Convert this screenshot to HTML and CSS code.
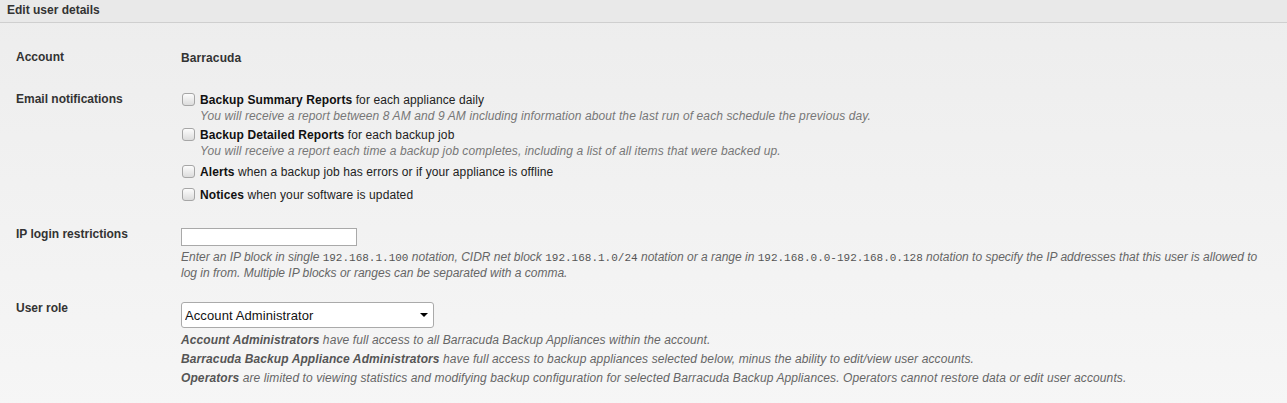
FILE: index.html
```html
<!DOCTYPE html>
<html>
<head>
<meta charset="utf-8">
<link rel="stylesheet" href="styles.css">
</head>
<body>
<div class="panel">
  <div class="panel-header">Edit user details</div>
  <div class="form">
    <div class="row row-account">
      <div class="label">Account</div>
      <div class="value value-text">Barracuda</div>
    </div>
    <div class="row row-email">
      <div class="label">Email notifications</div>
      <div class="value">
        <div class="option">
          <span class="check"></span>
          <div class="opt-body">
            <div class="opt-main"><b>Backup Summary Reports</b> for each appliance daily</div>
            <div class="opt-desc">You will receive a report between 8 AM and 9 AM including information about the last run of each schedule the previous day.</div>
          </div>
        </div>
        <div class="option">
          <span class="check"></span>
          <div class="opt-body">
            <div class="opt-main"><b>Backup Detailed Reports</b> for each backup job</div>
            <div class="opt-desc">You will receive a report each time a backup job completes, including a list of all items that were backed up.</div>
          </div>
        </div>
        <div class="option option-single">
          <span class="check"></span>
          <div class="opt-body">
            <div class="opt-main"><b>Alerts</b> when a backup job has errors or if your appliance is offline</div>
          </div>
        </div>
        <div class="option option-single">
          <span class="check"></span>
          <div class="opt-body">
            <div class="opt-main"><b>Notices</b> when your software is updated</div>
          </div>
        </div>
      </div>
    </div>
    <div class="row row-ip">
      <div class="label">IP login restrictions</div>
      <div class="value value-ip">
        <input class="text-input" type="text">
        <div class="help">Enter an IP block in single <code>192.168.1.100</code> notation, CIDR net block <code>192.168.1.0/24</code> notation or a range in <code>192.168.0.0-192.168.0.128</code> notation to specify the IP addresses that this user is allowed to log in from. Multiple IP blocks or ranges can be separated with a comma.</div>
      </div>
    </div>
    <div class="row row-role">
      <div class="label">User role</div>
      <div class="value value-role">
        <div class="select-wrap">
          <select class="select"><option>Account Administrator</option></select>
        </div>
        <div class="role-help">
          <div class="role-line"><b>Account Administrators</b> have full access to all Barracuda Backup Appliances within the account.</div>
          <div class="role-line"><b>Barracuda Backup Appliance Administrators</b> have full access to backup appliances selected below, minus the ability to edit/view user accounts.</div>
          <div class="role-line"><b>Operators</b> are limited to viewing statistics and modifying backup configuration for selected Barracuda Backup Appliances. Operators cannot restore data or edit user accounts.</div>
        </div>
      </div>
    </div>
  </div>
</div>
</body>
</html>
```
FILE: styles.css
```css
html, body {
  margin: 0;
  padding: 0;
}
body {
  font-family: "Liberation Sans", Arial, sans-serif;
  font-size: 12px;
  color: #333;
  background: linear-gradient(#ededed, #f6f6f6);
  min-height: 403px;
}
.panel-header {
  height: 22px;
  line-height: 21px;
  padding-left: 7px;
  font-weight: bold;
  color: #333;
  background: #e9e9e9;
  border-bottom: 1px solid #cfcfcf;
}
.form {
  padding: 25px 18px 0 16px;
}
.row {
  display: grid;
  grid-template-columns: 165px 1fr;
  margin-bottom: 22px;
}
.label {
  font-weight: bold;
  line-height: 16px;
  padding-top: 1px;
  color: #333;
}
.value {
  letter-spacing: 0.1px;
}
.value-text {
  line-height: 20px;
  font-weight: bold;
  color: #333;
}
.row-email {
  margin-bottom: 19px;
}
.option {
  display: flex;
  align-items: flex-start;
  margin-bottom: 2px;
}
.option-single {
  margin-bottom: 0;
  padding-top: 1px;
}
.option-single .opt-main {
  line-height: 22px;
}
.check {
  box-sizing: border-box;
  width: 13px;
  height: 13px;
  margin: 3px 5px 0 1px;
  border: 1px solid #a6a6a6;
  border-radius: 3px;
  background: linear-gradient(#fcfcfc, #dcdcdc);
  flex: none;
}
.option-single .check {
  margin-top: 4px;
}
.opt-main {
  line-height: 20px;
  color: #222;
}
.opt-main b {
  color: #111;
}
.opt-desc {
  line-height: 13px;
  font-style: italic;
  color: #777;
}
.row-ip {
  margin-bottom: 18px;
}
.value-ip {
  padding-top: 3px;
  letter-spacing: 0;
}
.text-input {
  display: block;
  box-sizing: border-box;
  width: 176px;
  height: 18px;
  margin: 0;
  border: 1px solid #a9a9a9;
  background: #fff;
  padding: 0 3px;
}
.help {
  margin-top: 3px;
  line-height: 16px;
  font-style: italic;
  color: #666;
}
.help code {
  font-family: "Liberation Mono", "Courier New", monospace;
  font-size: 11px;
  line-height: 14px;
  font-style: normal;
  color: #555;
}
.value-role {
  padding-top: 3px;
}
.select-wrap {
  position: relative;
  width: 253px;
}
.select-wrap::after {
  content: "";
  position: absolute;
  right: 6px;
  top: 11px;
  border-left: 4px solid transparent;
  border-right: 4px solid transparent;
  border-top: 4px solid #000;
  pointer-events: none;
}
.select {
  display: block;
  appearance: none;
  -webkit-appearance: none;
  box-sizing: border-box;
  width: 253px;
  height: 26px;
  margin: 0;
  padding: 0 0 0 3px;
  border: 1px solid #aaa;
  border-radius: 3px;
  background: #fff;
  font-family: "Liberation Sans", Arial, sans-serif;
  font-size: 13px;
  letter-spacing: 0.1px;
  color: #111;
}
.role-help {
  margin-top: 3px;
}
.role-line {
  line-height: 19px;
  font-style: italic;
  color: #666;
}
.role-line b {
  color: #555;
}
```
